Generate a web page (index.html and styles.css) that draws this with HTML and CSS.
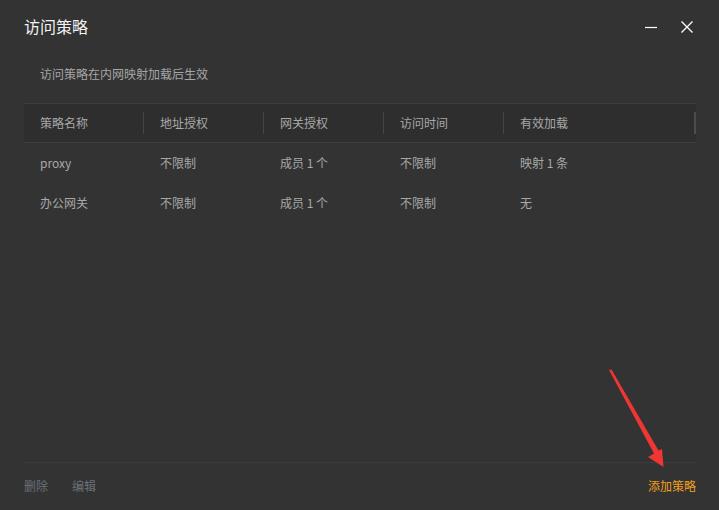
FILE: index.html
```html
<!DOCTYPE html>
<html lang="zh-CN">

<head>
  <meta charset="UTF-8" />
  <title>访问策略</title>
  <link rel="stylesheet" href="styles.css">
</head>

<body>
  <div class="dialog">
    <!-- title bar -->
    <div class="titlebar">
      <h1>访问策略</h1>
      <div class="win-btns">
        <span class="win-btn">
          <svg width="12" height="12" viewBox="0 0 12 12"><path d="M0 6.5h12" stroke="#fff" stroke-width="1.2"/></svg>
        </span>
        <span class="win-btn">
          <svg width="12" height="12" viewBox="0 0 12 12"><path d="M0.5 0.5l11 11M11.5 0.5l-11 11" stroke="#fff" stroke-width="1.3"/></svg>
        </span>
      </div>
    </div>

    <p class="desc">访问策略在内网映射加载后生效</p>

    <div class="table">
      <div class="row head">
        <div class="cell">策略名称</div>
        <div class="cell">地址授权</div>
        <div class="cell">网关授权</div>
        <div class="cell">访问时间</div>
        <div class="cell last">有效加载</div>
      </div>
      <div class="row">
        <div class="cell">proxy</div>
        <div class="cell">不限制</div>
        <div class="cell">成员 1 个</div>
        <div class="cell">不限制</div>
        <div class="cell">映射 1 条</div>
      </div>
      <div class="row">
        <div class="cell">办公网关</div>
        <div class="cell">不限制</div>
        <div class="cell">成员 1 个</div>
        <div class="cell">不限制</div>
        <div class="cell">无</div>
      </div>
    </div>

    <div class="footer">
      <a class="link muted">删除</a>
      <a class="link muted">编辑</a>
      <a class="link add">添加策略</a>
    </div>
  </div>

  <!-- red annotation arrow -->
  <svg class="arrow" width="719" height="510" viewBox="0 0 719 510">
    <polygon points="609,370 611.5,369.5 658.5,450.5 662,449 663.5,467 648,457 654,453.5" fill="#f03535"/>
  </svg>
</body>

</html>
```

FILE: styles.css
```css
* {
  margin: 0;
  padding: 0;
  box-sizing: border-box;
}

html,
body {
  width: 719px;
  height: 510px;
}

body {
  background: #333333;
  font-family: "Noto Sans CJK SC", "Noto Sans", sans-serif;
  font-size: 12px;
  color: #a8a8a8;
  overflow: hidden;
  position: relative;
}

.dialog {
  height: 100%;
  padding: 0 23px 0 24px;
  display: flex;
  flex-direction: column;
}

/* === title bar === */
.titlebar {
  height: 54px;
  display: flex;
  align-items: center;
  justify-content: space-between;
}

.titlebar h1 {
  font-size: 16px;
  font-weight: normal;
  color: #f2f2f2;
  line-height: 20px;
  margin-top: -2px;
}

.win-btns {
  display: flex;
  gap: 24px;
  margin-right: 3px;
}

.win-btn {
  width: 12px;
  height: 12px;
  display: flex;
}

.desc {
  line-height: 20px;
  padding: 10px 16px 19px;
  color: #a6a6a6;
}

/* === table === */
.table {
  border-top: 1px solid #3d3d3d;
}

.row {
  display: flex;
  height: 40px;
  align-items: center;
}

.cell {
  width: 120px;
  padding-left: 16px;
  line-height: 20px;
}

.head {
  height: 39px;
  background: #2e2e2e;
  border-bottom: 1px solid #3f3f3f;
}

.head .cell {
  border-right: 1px solid #454545;
  height: 22px;
  line-height: 22px;
}

.head .last {
  flex: 1;
  border-right: 2px solid #4c4c4c;
}

/* === footer === */
.footer {
  margin-top: auto;
  border-top: 1px solid #3c3c3c;
  height: 48px;
  display: flex;
  align-items: center;
  gap: 24px;
  padding-bottom: 1px;
}

.link {
  line-height: 20px;
  cursor: pointer;
}

.muted {
  color: #6a717a;
}

.add {
  margin-left: auto;
  color: #f0a01c;
}

.arrow {
  position: absolute;
  left: 0;
  top: 0;
  pointer-events: none;
}
```
